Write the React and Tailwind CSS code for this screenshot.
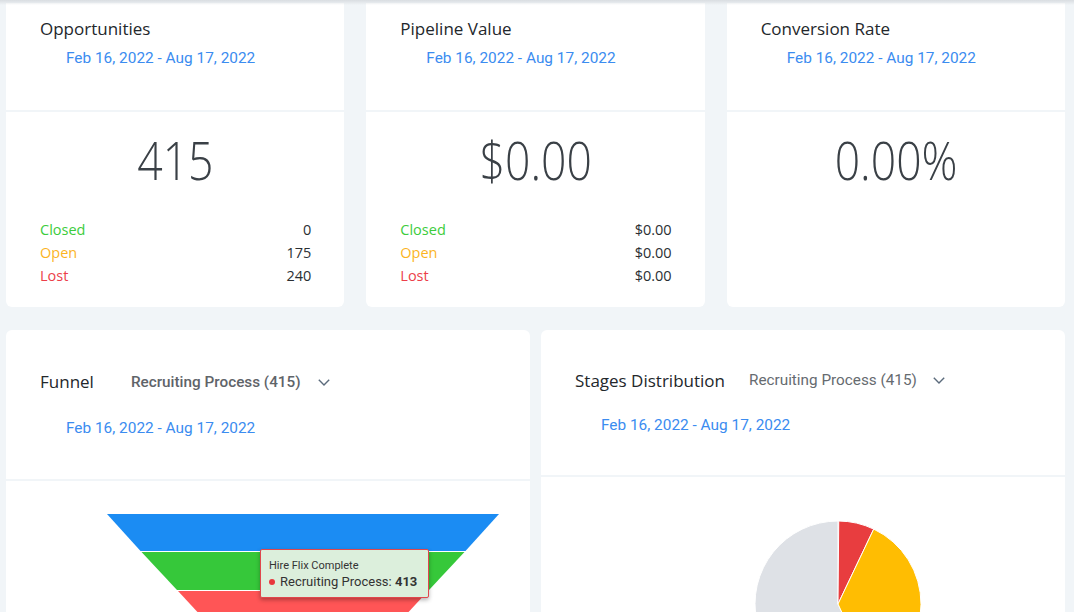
import React from 'react';

// ── Data ──────────────────────────────────────────────────────────────
const RANGE = 'Feb 16, 2022 - Aug 17, 2022';

const STATS = [
  {
    title: 'Opportunities',
    value: '415',
    rows: [
      ['Closed', '0'],
      ['Open', '175'],
      ['Lost', '240'],
    ],
  },
  {
    title: 'Pipeline Value',
    value: '$0.00',
    rows: [
      ['Closed', '$0.00'],
      ['Open', '$0.00'],
      ['Lost', '$0.00'],
    ],
  },
  { title: 'Conversion Rate', value: '0.00%', rows: [] },
];

const ROW_COLORS = {
  Closed: 'text-[#3ccc3c]',
  Open: 'text-[#fbb41f]',
  Lost: 'text-[#ec3f4a]',
};

const SEGOE = "font-['Open_Sans',sans-serif]";
const ROBOTO = "font-['Roboto',sans-serif]";

// ── Small pieces ──────────────────────────────────────────────────────
const Chevron = () => (
  <svg width="12" height="7" viewBox="0 0 12 7" fill="none">
    <path d="M0.8 0.8 L6 6 L11.2 0.8" stroke="#5b6b7c" strokeWidth="1.4" />
  </svg>
);

const StatCard = ({ card }) => (
  <div className="flex flex-col gap-[2px]">
    <div className="bg-white h-[107px] pl-[34px] pt-[14px]">
      <h3 className={`${SEGOE} text-[17px] leading-[24px] text-[#23272b]`}>{card.title}</h3>
      <p className={`${ROBOTO} text-[15.4px] leading-[20px] text-[#3b8cf0] mt-[7px] pl-[26px]`}>{RANGE}</p>
    </div>
    <div className="bg-white h-[195px] rounded-b-md px-[34px] pt-[17px]">
      <div className="text-center">
        <span className={`${SEGOE} inline-block scale-x-[0.84] font-light text-[53px] leading-[62px] text-[#3a4046]`}>
          {card.value}
        </span>
      </div>
      <div className="mt-[27px] flex flex-col">
        {card.rows.map(([label, val]) => (
          <div key={label} className={`${SEGOE} flex justify-between text-[14.5px] leading-[23px]`}>
            <span className={ROW_COLORS[label]}>{label}</span>
            <span className="text-[#2b2f33] mr-[-1px]">{val}</span>
          </div>
        ))}
      </div>
    </div>
  </div>
);

// ── Charts ────────────────────────────────────────────────────────────
const Funnel = () => (
  <svg width="400" height="100" viewBox="0 0 400 100" className="block">
    <polygon points="0,0 392,0 358.5,37 33.5,37" fill="#1b8cf3" />
    <polygon points="34.5,38 357.5,38 322,76 70,76" fill="#36c83a" />
    <polygon points="71,77 321,77 284,117 108,117" fill="#ff5556" />
  </svg>
);

const polar = (cx, cy, r, deg) => {
  const a = ((deg - 90) * Math.PI) / 180;
  return [cx + r * Math.cos(a), cy + r * Math.sin(a)];
};

const slice = (cx, cy, r, from, to) => {
  const [x1, y1] = polar(cx, cy, r, from);
  const [x2, y2] = polar(cx, cy, r, to);
  const large = to - from > 180 ? 1 : 0;
  return `M${cx},${cy} L${x1},${y1} A${r},${r} 0 ${large} 1 ${x2},${y2} Z`;
};

const Pie = () => (
  <svg width="180" height="180" viewBox="0 0 180 180" className="block">
    <path d={slice(90, 90, 83, 155, 360)} fill="#dee1e6" stroke="#fff" strokeWidth="1" />
    <path d={slice(90, 90, 83, 0.5, 25.5)} fill="#e83d3f" stroke="#fff" strokeWidth="1" />
    <path d={slice(90, 90, 83, 25.5, 155)} fill="#ffbd02" stroke="#fff" strokeWidth="1" />
  </svg>
);

// ── Main component ────────────────────────────────────────────────────
export default function App() {
  return (
    <div className="relative h-[612px] overflow-hidden bg-[#f1f5f8] pl-[6px] pr-[9px] pt-[3px]">
      {/* header shadow peeking from above */}
      <div className="absolute top-0 left-0 right-0 h-[5px] bg-gradient-to-b from-[#d9dde1] to-transparent" />

      {/* ── Stat cards ───────────────────────────────────────────────── */}
      <div className="grid grid-cols-3 gap-[22px]">
        {STATS.map((c) => (
          <StatCard key={c.title} card={c} />
        ))}
      </div>

      {/* ── Chart cards ──────────────────────────────────────────────── */}
      <div className="grid grid-cols-2 gap-[11px] mt-[23px]">
        {/* Funnel */}
        <div className="flex flex-col gap-[2px]">
          <div className="bg-white rounded-t-md h-[149px] pl-[34px] pt-[40px]">
            <div className="flex items-center">
              <h3 className={`${SEGOE} text-[17px] leading-[24px] text-[#23272b]`}>Funnel</h3>
              <span className={`${ROBOTO} font-medium text-[15.3px] text-[#5f6469] ml-[37px]`}>
                Recruiting Process (415)
              </span>
              <span className="ml-[17px] mt-[1px]">
                <Chevron />
              </span>
            </div>
            <p className={`${ROBOTO} text-[15.4px] leading-[20px] text-[#3b8cf0] mt-[24px] pl-[26px]`}>{RANGE}</p>
          </div>
          <div className="relative bg-white h-[140px] pt-[33px] pl-[101px]">
            <Funnel />
            {/* tooltip */}
            <div className="absolute left-[254px] top-[68px] w-[169px] h-[49px] bg-[#dcefdc] border border-[#e0474d] rounded-[2px] shadow-[0_2px_4px_rgba(0,0,0,0.3)] px-[8px] pt-[8px]">
              <p className={`${ROBOTO} text-[11px] leading-[15px] text-[#333]`}>Hire Flix Complete</p>
              <p className={`${ROBOTO} text-[13px] leading-[18px] text-[#333] flex items-center`}>
                <span className="inline-block w-[6px] h-[6px] rounded-full bg-[#e8383d] mr-[5px]" />
                Recruiting Process:&nbsp;<b className="font-bold">413</b>
              </p>
            </div>
          </div>
        </div>

        {/* Stages distribution */}
        <div className="flex flex-col gap-[2px]">
          <div className="bg-white rounded-t-md h-[145px] pl-[34px] pt-[39px]">
            <div className="flex items-center">
              <h3 className={`${SEGOE} text-[17px] leading-[24px] text-[#23272b]`}>Stages Distribution</h3>
              <span className={`${ROBOTO} text-[15.3px] text-[#666b70] ml-[24px] -mt-[2px]`}>
                Recruiting Process (415)
              </span>
              <span className="ml-[16px] -mt-[1px]">
                <Chevron />
              </span>
            </div>
            <p className={`${ROBOTO} text-[15.4px] leading-[20px] text-[#3b8cf0] mt-[22px] pl-[26px]`}>{RANGE}</p>
          </div>
          <div className="bg-white h-[150px] pt-[37px] pl-[207px]">
            <Pie />
          </div>
        </div>
      </div>
    </div>
  );
}
